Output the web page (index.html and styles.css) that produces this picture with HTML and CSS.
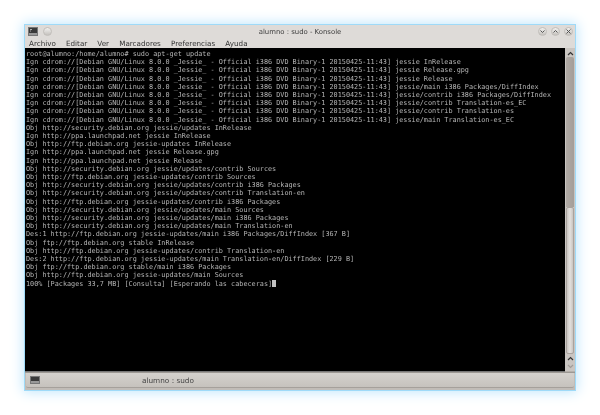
FILE: index.html
```html
<!DOCTYPE html>
<html lang="es">
<head>
<meta charset="utf-8">
<title>alumno : sudo - Konsole</title>
<link rel="stylesheet" href="styles.css">
</head>
<body>
<div class="window">
  <header class="titlebar">
    <div class="tb-left">
      <svg class="term-icon" width="10" height="9" viewBox="0 0 10 9"><rect x="0.5" y="0.5" width="9" height="8" fill="#3a3a3a" stroke="#777"/><rect x="1" y="6" width="8" height="2" fill="#999"/><path d="M2 2.5h2M2 4h1" stroke="#ccc" stroke-width="0.8"/></svg>
      <span class="btn"></span>
    </div>
    <div class="title">alumno : sudo - Konsole</div>
    <div class="tb-right">
      <span class="btn"><svg width="7" height="7" viewBox="0 0 7 7"><path d="M1.5 2.5L3.5 4.5L5.5 2.5" fill="none" stroke="#555" stroke-width="1"/></svg></span>
      <span class="btn"><svg width="7" height="7" viewBox="0 0 7 7"><path d="M1.5 4.5L3.5 2.5L5.5 4.5" fill="none" stroke="#555" stroke-width="1"/></svg></span>
      <span class="btn"><svg width="7" height="7" viewBox="0 0 7 7"><path d="M1.5 1.5L5.5 5.5M5.5 1.5L1.5 5.5" fill="none" stroke="#555" stroke-width="1"/></svg></span>
    </div>
  </header>
  <nav class="menubar">
    <span>Archivo</span><span>Editar</span><span>Ver</span><span>Marcadores</span><span>Preferencias</span><span>Ayuda</span>
  </nav>
  <main class="content">
    <pre class="terminal">root@alumno:/home/alumno# sudo apt-get update
Ign cdrom://[Debian GNU/Linux 8.0.0 _Jessie_ - Official i386 DVD Binary-1 20150425-11:43] jessie InRelease
Ign cdrom://[Debian GNU/Linux 8.0.0 _Jessie_ - Official i386 DVD Binary-1 20150425-11:43] jessie Release.gpg
Ign cdrom://[Debian GNU/Linux 8.0.0 _Jessie_ - Official i386 DVD Binary-1 20150425-11:43] jessie Release
Ign cdrom://[Debian GNU/Linux 8.0.0 _Jessie_ - Official i386 DVD Binary-1 20150425-11:43] jessie/main i386 Packages/DiffIndex
Ign cdrom://[Debian GNU/Linux 8.0.0 _Jessie_ - Official i386 DVD Binary-1 20150425-11:43] jessie/contrib i386 Packages/DiffIndex
Ign cdrom://[Debian GNU/Linux 8.0.0 _Jessie_ - Official i386 DVD Binary-1 20150425-11:43] jessie/contrib Translation-es_EC
Ign cdrom://[Debian GNU/Linux 8.0.0 _Jessie_ - Official i386 DVD Binary-1 20150425-11:43] jessie/contrib Translation-es
Ign cdrom://[Debian GNU/Linux 8.0.0 _Jessie_ - Official i386 DVD Binary-1 20150425-11:43] jessie/main Translation-es_EC
Obj http://security.debian.org jessie/updates InRelease
Ign http://ppa.launchpad.net jessie InRelease
Obj http://ftp.debian.org jessie-updates InRelease
Ign http://ppa.launchpad.net jessie Release.gpg
Ign http://ppa.launchpad.net jessie Release
Obj http://security.debian.org jessie/updates/contrib Sources
Obj http://ftp.debian.org jessie-updates/contrib Sources
Obj http://security.debian.org jessie/updates/contrib i386 Packages
Obj http://security.debian.org jessie/updates/contrib Translation-en
Obj http://ftp.debian.org jessie-updates/contrib i386 Packages
Obj http://security.debian.org jessie/updates/main Sources
Obj http://security.debian.org jessie/updates/main i386 Packages
Obj http://security.debian.org jessie/updates/main Translation-en
Des:1 http://ftp.debian.org jessie-updates/main i386 Packages/DiffIndex [367 B]
Obj ftp://ftp.debian.org stable InRelease
Obj http://ftp.debian.org jessie-updates/contrib Translation-en
Des:2 http://ftp.debian.org jessie-updates/main Translation-en/DiffIndex [229 B]
Obj ftp://ftp.debian.org stable/main i386 Packages
Obj http://ftp.debian.org jessie-updates/main Sources
100% [Packages 33,7 MB] [Consulta] [Esperando las cabeceras]<span class="cursor"></span></pre>
    <aside class="scrollbar">
      <svg class="arrow top" width="7" height="5" viewBox="0 0 7 5"><path d="M1 4L3.5 1.5L6 4" fill="none" stroke="#333" stroke-width="1.2"/></svg>
      <div class="trough"></div>
      <div class="slider"></div>
      <svg class="arrow" width="7" height="5" viewBox="0 0 7 5"><path d="M1 4L3.5 1.5L6 4" fill="none" stroke="#333" stroke-width="1.2"/></svg>
      <svg class="arrow" width="7" height="5" viewBox="0 0 7 5"><path d="M1 1L3.5 3.5L6 1" fill="none" stroke="#a09c98" stroke-width="1.2"/></svg>
    </aside>
  </main>
  <footer class="tabbar">
    <div class="tab">
      <svg class="term-icon" width="10" height="8" viewBox="0 0 10 8"><rect x="0.5" y="0.5" width="9" height="7" fill="#3a3a3a" stroke="#777"/><rect x="1" y="5" width="8" height="2" fill="#999"/></svg>
      <span class="tab-label">alumno : sudo</span>
    </div>
  </footer>
</div>
</body>
</html>
```
FILE: styles.css
```css
* { box-sizing: border-box; }
html, body { margin: 0; height: 100%; background: #fff; overflow: hidden; }
body { padding: 24px 24px 0; font-family: "DejaVu Sans", sans-serif; }

.window {
  width: 552px;
  height: 367px;
  display: flex;
  flex-direction: column;
  background: #dedbd8;
  border: 1px solid #9fdaf8;
  box-shadow: 0 0 12px 1px #bfe6fc;
}

.titlebar {
  height: 13px;
  flex: none;
  display: flex;
  align-items: center;
  justify-content: space-between;
  position: relative;
  padding: 0 2px 0 3px;
  color: #3c3c3c;
}
.tb-left { display: flex; align-items: center; gap: 5px; }
.tb-right { display: flex; align-items: center; gap: 4px; }
.title {
  position: absolute;
  left: 0;
  right: 0;
  text-align: center;
  font-size: 6.9px;
  filter: blur(0.25px);
}
.btn {
  width: 9px;
  height: 9px;
  border-radius: 50%;
  display: flex;
  align-items: center;
  justify-content: center;
  background: linear-gradient(#f2f1ef, #c4c1bd);
  border: 1px solid #c1beba;
}

.menubar {
  height: 10px;
  flex: none;
  display: flex;
  align-items: center;
  gap: 10.1px;
  padding-left: 4px;
  font-size: 7.2px;
  color: #333;
  filter: blur(0.25px);
}

.content {
  flex: 1;
  min-height: 0;
  display: flex;
  background: #a9a39e;
}
.terminal {
  flex: 1;
  min-width: 0;
  margin: 0;
  padding: 2px 0 0 1px;
  background: #000;
  color: #b4b4b4;
  font-family: "DejaVu Sans Mono", monospace;
  font-size: 6.82px;
  line-height: 8.21px;
  overflow: hidden;
  white-space: pre;
  filter: blur(0.25px);
  border-bottom: 1px solid #777;
}
.cursor {
  display: inline-block;
  width: 4px;
  height: 7px;
  vertical-align: -1px;
  background: #c2c2c2;
}

.scrollbar {
  width: 10px;
  flex: none;
  display: flex;
  flex-direction: column;
  align-items: center;
  padding-top: 3px;
  background: #c9c5c1;
  border-bottom: 1px solid #b5b0ab;
}
.arrow { flex: none; height: 5px; margin-bottom: 3px; }
.arrow.top { margin-bottom: 1px; }
.trough {
  width: 8px;
  height: 150px;
  flex: none;
  background: linear-gradient(90deg, #b0aaa5, #a49e99);
  border-radius: 2px 2px 0 0;
}
.slider {
  width: 8px;
  height: 147px;
  flex: none;
  margin-bottom: 2px;
  background: linear-gradient(90deg, #c9c5c1, #e3e0dd 50%, #c9c5c1);
  border: 1px solid #a9a39e;
  border-radius: 2px;
}

.tabbar {
  height: 18px;
  flex: none;
  padding: 0 1px 2px 1px;
  background: #c1bcb7;
  border-top: 1px solid #9c9893;
}
.tab {
  height: 15px;
  display: flex;
  align-items: center;
  position: relative;
  padding-left: 4px;
  background: linear-gradient(#d4d1cd, #c6c2bd);
  border-bottom: 1px solid #a5a09b;
  border-radius: 0 0 2px 2px;
}
.tab-label {
  position: absolute;
  left: 0;
  right: 0;
  padding-left: 116px;
  white-space: nowrap;
  font-size: 7.3px;
  color: #444;
  filter: blur(0.25px);
}
```
